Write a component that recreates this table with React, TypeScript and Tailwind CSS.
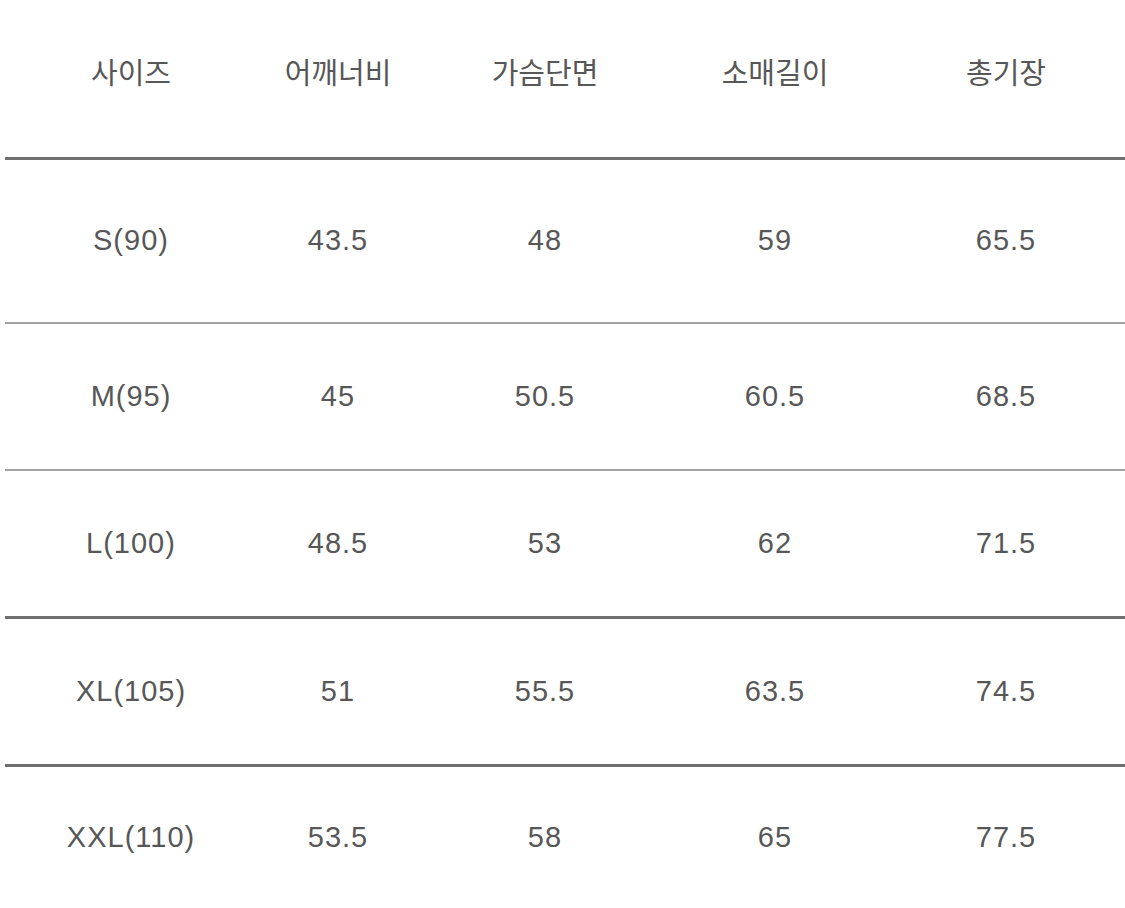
const headers = ['사이즈', '어깨너비', '가슴단면', '소매길이', '총기장'];

const rows = [
  { cells: ['S(90)', '43.5', '48', '59', '65.5'], h: 'h-[164px]', border: 'border-b-2 border-[#a3a3a3]' },
  { cells: ['M(95)', '45', '50.5', '60.5', '68.5'], h: 'h-[147px]', border: 'border-b-2 border-[#a3a3a3]' },
  { cells: ['L(100)', '48.5', '53', '62', '71.5'], h: 'h-[148px]', border: 'border-b-[3px] border-[#6e6e6e]' },
  { cells: ['XL(105)', '51', '55.5', '63.5', '74.5'], h: 'h-[148px]', border: 'border-b-[3px] border-[#6e6e6e]' },
  { cells: ['XXL(110)', '53.5', '58', '65', '77.5'], h: 'h-[141px]', border: '' },
];

function Row({ cells, className }: { cells: string[]; className: string }) {
  return (
    <div className={`ml-[5px] ${className}`}>
      <div className="grid h-full grid-cols-[200px_214px_200px_260px_202px] items-center pl-[26px]">
        {cells.map((c, i) => (
          <div key={i} className="text-center">
            {c}
          </div>
        ))}
      </div>
    </div>
  );
}

export default function App() {
  return (
    <div
      className="w-[1125px] h-[908px] overflow-hidden bg-white text-[29px] text-[#575757]"
      style={{ fontFamily: '"Liberation Sans", "Noto Sans CJK KR", sans-serif' }}
    >
      <Row cells={headers} className="h-[160px] pb-[8px] border-b-[3px] border-[#6e6e6e]" />
      {rows.map((r, i) => (
        <Row key={i} cells={r.cells} className={`${r.h} ${r.border} tracking-[1px]`} />
      ))}
    </div>
  );
}
